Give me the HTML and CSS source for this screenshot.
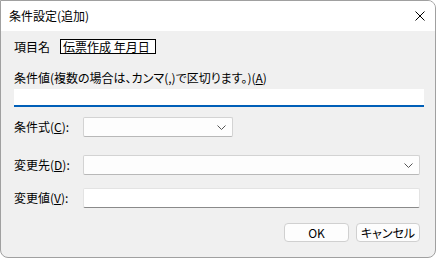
FILE: index.html
```html
<!DOCTYPE html>
<html lang="ja">
<head>
<meta charset="utf-8">
<link rel="stylesheet" href="styles.css">
</head>
<body>
<div class="window">
  <div class="titlebar">
    <span class="title">条件設定(追加)</span>
    <svg class="close" width="10" height="10" viewBox="0 0 10 10"><path d="M0.5 0.5 L9.5 9.5 M9.5 0.5 L0.5 9.5" stroke="#000" stroke-width="1" fill="none"/></svg>
  </div>
  <div class="content">
    <div class="item-row">
      <span class="item-label">項目名</span>
      <span class="item-box">伝票作成 年月日</span>
    </div>
    <div class="cond-label">条件値(複数の場合は、カンマ(,)で区切ります。)(<u>A</u>)</div>
    <div class="cond-input"></div>
    <div class="row row-expr">
      <span class="label">条件式(<u>C</u>):</span>
      <div class="combo combo-short">
        <svg class="chev" width="9" height="5" viewBox="0 0 9 5"><path d="M0.5 0.5 L4.5 4.5 L8.5 0.5" stroke="#555" stroke-width="1" fill="none"/></svg>
      </div>
    </div>
    <div class="row row-dest">
      <span class="label">変更先(<u>D</u>):</span>
      <div class="combo combo-long">
        <svg class="chev" width="9" height="5" viewBox="0 0 9 5"><path d="M0.5 0.5 L4.5 4.5 L8.5 0.5" stroke="#555" stroke-width="1" fill="none"/></svg>
      </div>
    </div>
    <div class="row row-val">
      <span class="label">変更値(<u>V</u>):</span>
      <div class="textbox"></div>
    </div>
    <div class="buttons">
      <div class="btn">OK</div>
      <div class="btn">キャンセル</div>
    </div>
  </div>
</div>
</body>
</html>
```
FILE: styles.css
```css
* { box-sizing: border-box; }
html, body { margin: 0; padding: 0; background: #ffffff; }
body {
  font-family: "Noto Sans CJK JP", "Noto Sans", sans-serif;
  font-size: 12px;
  color: #000;
  font-feature-settings: "palt" 1;
}
.window {
  width: 436px;
  height: 258px;
  border: 1px solid #a0a0a0;
  border-radius: 0 8px 8px 8px;
  overflow: hidden;
  background: #f0f0f0;
  display: flex;
  flex-direction: column;
}
.titlebar {
  height: 30px;
  background: #ffffff;
  display: flex;
  align-items: center;
  justify-content: space-between;
  padding: 0 10px 0 8px;
  flex: none;
}
.title { font-size: 12px; line-height: 16px; }
.close { display: block; }
.content {
  flex: 1;
  display: flex;
  flex-direction: column;
  padding: 0 15px 0 13px;
}
.item-row {
  display: flex;
  align-items: center;
  margin-top: 8px;
  height: 15px;
}
.item-label { width: 46px; line-height: 15px; }
.item-box {
  border: 1px solid #000;
  background: #fff;
  height: 15px;
  line-height: 13px;
  padding: 0 2px;
  width: 96px;
}
.cond-label {
  margin-top: 16px;
  line-height: 16px;
  height: 16px;
}
.cond-input {
  margin-top: 3px;
  width: 410px;
  height: 18px;
  background: #fff;
  border-bottom: 2px solid #005fb8;
}
.row {
  display: flex;
  align-items: center;
  height: 20px;
}
.row-expr { margin-top: 10px; }
.row-dest { margin-top: 18px; }
.row-val { margin-top: 13px; }
.label { width: 69px; line-height: 16px; }
.combo {
  height: 20px;
  background: #fdfdfd;
  border: 1px solid #d3d3d3;
  border-bottom-color: #b8b8b8;
  border-radius: 2px;
  display: flex;
  align-items: center;
  justify-content: flex-end;
  padding-right: 6px;
}
.combo-short { width: 150px; }
.combo-long { width: 337px; }
.chev { display: block; }
.textbox {
  width: 337px;
  height: 20px;
  background: #fff;
  border: 1px solid #e3e3e3;
  border-bottom: 1px solid #8a8a8a;
  border-radius: 2px;
}
.buttons {
  display: flex;
  justify-content: flex-end;
  gap: 7px;
  margin-top: 15px;
}
.btn {
  width: 65px;
  height: 19px;
  background: #fdfdfd;
  border: 1px solid #d0d0d0;
  border-radius: 4px;
  display: flex;
  align-items: center;
  justify-content: center;
  line-height: 16px;
}
.btn:last-child { width: 64px; }
```
